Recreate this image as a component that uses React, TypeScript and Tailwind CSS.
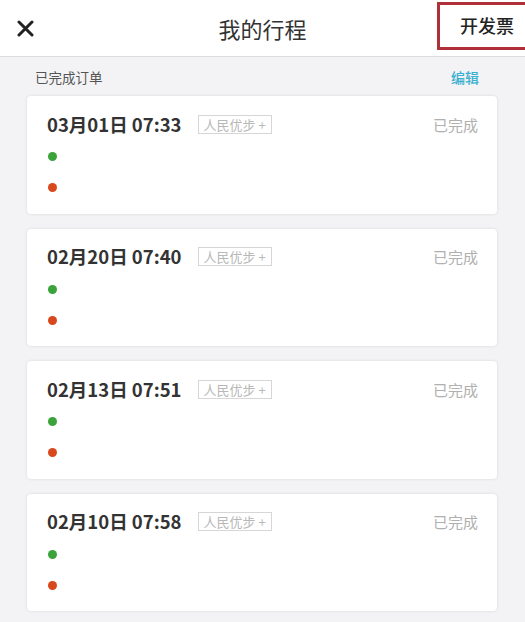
import React from 'react';

const trips = [
  { time: '03月01日 07:33' },
  { time: '02月20日 07:40' },
  { time: '02月13日 07:51' },
  { time: '02月10日 07:58' },
];

const font = { fontFamily: '"Noto Sans CJK SC", "Noto Sans", sans-serif' };

const TripCard: React.FC<{ time: string }> = ({ time }) => (
  <div className="bg-white rounded-[4px] shadow-[0_0_3px_rgba(0,0,0,0.12)] h-[117.5px] pl-[20px] pr-[19px] pt-[12px]">
    <div className="flex items-center h-[32px]">
      <span className="text-[18.5px] font-bold text-[#333] leading-none">{time}</span>
      <span className="ml-[16px] border border-[#d6d6d6] text-[13px] text-[#b8b8b8] px-[5px] h-[19px] flex items-center leading-none">
        人民优步 +
      </span>
      <span className="ml-auto text-[15px] text-[#b0b0b0] leading-none">已完成</span>
    </div>
    <div className="mt-[12px] ml-[1px] w-[9px] h-[9px] rounded-full bg-[#3aa33a]" />
    <div className="mt-[22px] ml-[1px] w-[9px] h-[9px] rounded-full bg-[#d9471c]" />
  </div>
);

export default function App() {
  return (
    <div className="w-[525px] h-[622px] bg-[#f3f3f5] overflow-hidden" style={font}>
      <div className="h-[57px] bg-white border-b border-[#dcdcdc] flex items-center relative">
        <svg className="ml-[17px]" width="17" height="17" viewBox="0 0 17 17">
          <path d="M2 2L15 15M15 2L2 15" stroke="#222" strokeWidth="3" strokeLinecap="round" />
        </svg>
        <div className="absolute left-0 right-0 text-center text-[22px] text-[#333] pointer-events-none">我的行程</div>
        <div className="ml-auto mr-[-4px] mt-[-5px] h-[48px] w-[92px] border-[3px] border-[#b0303a] flex items-center pl-[20px] text-[18px] text-[#222] font-medium">
          开发票
        </div>
      </div>
      <div className="flex items-center justify-between pl-[35px] pr-[46px] h-[39px] pt-[1px]">
        <span className="text-[13.5px] text-[#555]">已完成订单</span>
        <span className="text-[14px] text-[#3cb0d0] font-medium">编辑</span>
      </div>
      <div className="flex flex-col gap-[15px] pl-[27px] pr-[28px]">
        {trips.map((t, i) => (
          <TripCard key={i} time={t.time} />
        ))}
      </div>
    </div>
  );
}
